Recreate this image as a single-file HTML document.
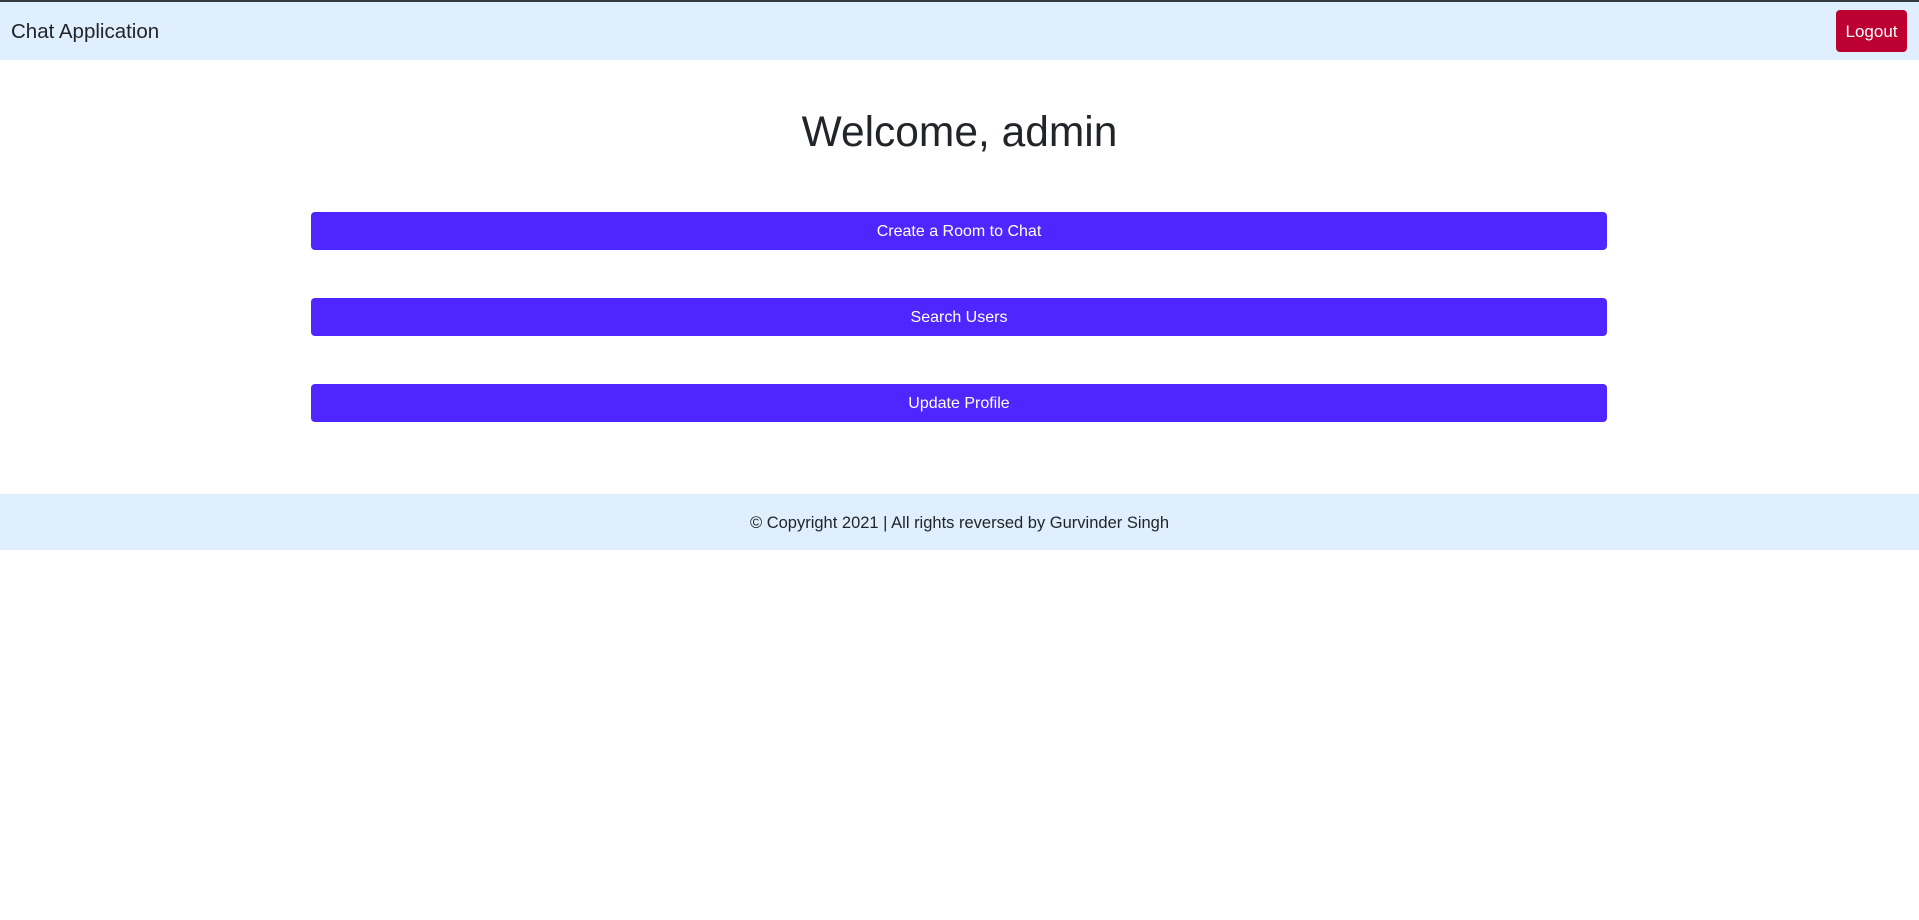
<!DOCTYPE html>
<html><head><meta charset="utf-8"><style>
*{margin:0;padding:0;box-sizing:border-box}
html,body{width:1919px;height:920px;background:#fff;font-family:"Liberation Sans",sans-serif;color:#212529;overflow:hidden;position:relative}
.top{position:absolute;left:0;top:0;width:1919px;height:2px;background:#343a40}
.nav{position:absolute;left:0;top:2px;width:1919px;height:58px;background:#dfeffd}
.brand{position:absolute;left:11px;top:18px;font-size:20.5px;line-height:24px;color:#212529}
.logout{position:absolute;left:1836px;top:8px;width:71px;height:42px;background:#bc0031;border-radius:4px;color:#fff;font-size:17px;line-height:44px;text-align:center}
h1{position:absolute;left:0;width:1919px;top:105px;text-align:center;font-weight:400;font-size:42.5px;line-height:56px;color:#212529}
.btn{position:absolute;left:311px;width:1296px;height:38px;background:#4f26ff;border-radius:4px;color:#fff;font-size:16px;line-height:40px;text-align:center}
.foot{position:absolute;left:0;top:494px;width:1919px;height:56px;background:#dfeffd;text-align:center;font-size:16.5px;line-height:58px;color:#212529}
</style></head><body>
<div class="top"></div>
<div class="nav"><div class="brand">Chat Application</div><div class="logout">Logout</div></div>
<h1>Welcome, admin</h1>
<div class="btn" style="top:212px">Create a Room to Chat</div>
<div class="btn" style="top:298px">Search Users</div>
<div class="btn" style="top:384px">Update Profile</div>
<div class="foot">© Copyright 2021 | All rights reversed by Gurvinder Singh</div>
</body></html>
